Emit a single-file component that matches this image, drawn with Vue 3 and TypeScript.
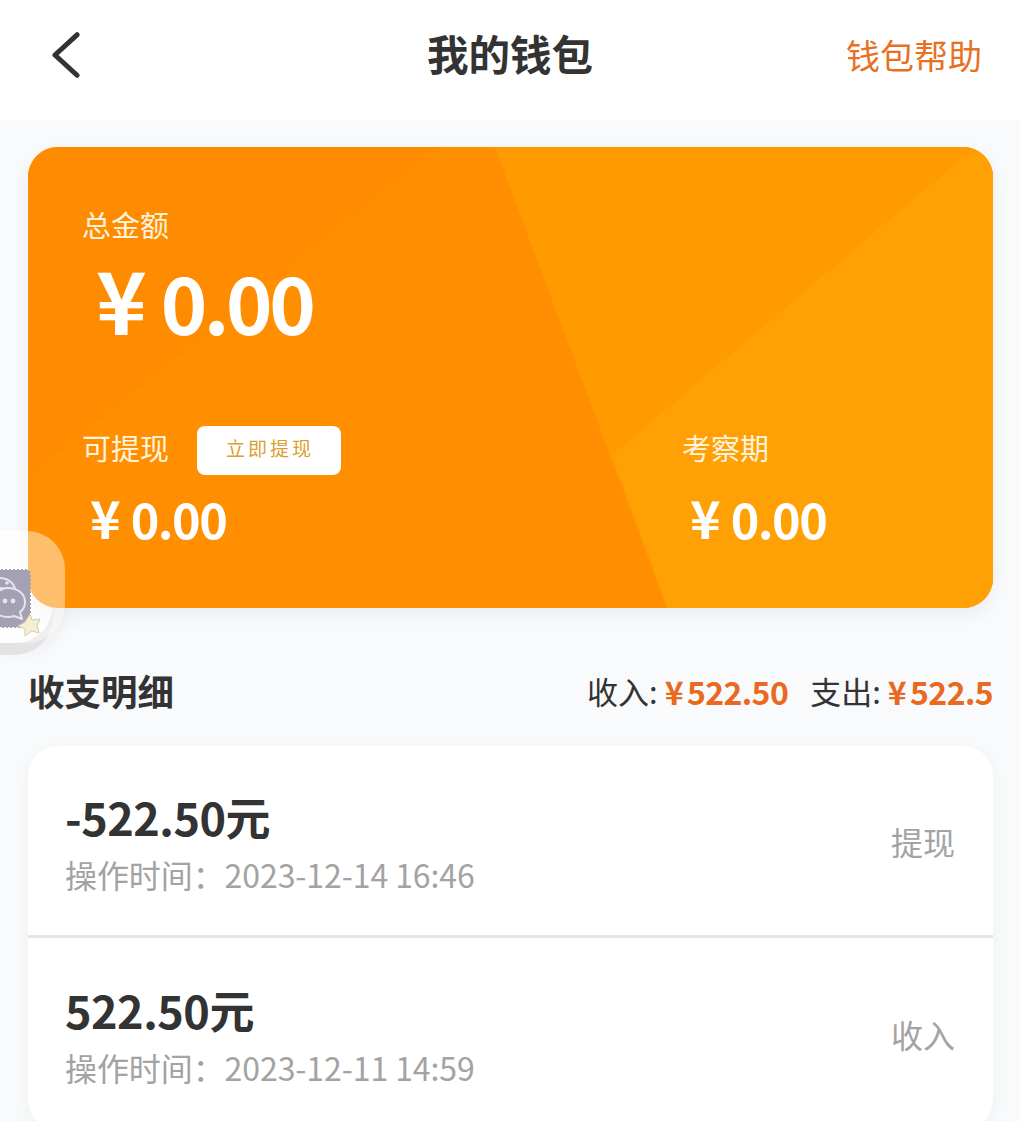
<script setup lang="ts">
interface Record {
  amount: string;
  time: string;
  kind: string;
}

const records: Record[] = [
  { amount: '-522.50元', time: '操作时间：2023-12-14 16:46', kind: '提现' },
  { amount: '522.50元', time: '操作时间：2023-12-11 14:59', kind: '收入' },
];
</script>

<template>
  <div class="page">
    <div class="float-base"></div>
    <header class="top">
      <svg class="back" viewBox="0 0 32 50" width="32" height="50">
        <path d="M28 3 L4 25 L28 47" fill="none" stroke="#333" stroke-width="5.5" stroke-linecap="round" stroke-linejoin="round" />
      </svg>
      <h1 class="title">我的钱包</h1>
      <span class="help">钱包帮助</span>
    </header>

    <main class="body">
      <section class="card">
        <svg class="card-bg" viewBox="0 0 965 461" preserveAspectRatio="none">
          <rect width="965" height="461" fill="#ff8f00" />
          <polygon points="0,0 412,0 0,330" fill="#ff8b00" />
          <polygon points="467,0 965,0 965,461 639,461" fill="#ff9a00" />
          <polygon points="584,308 935,10 965,0 965,461 639,461" fill="#ffa005" />
        </svg>
        <div class="total">
          <div class="label">总金额</div>
          <div class="big"><span class="yen">¥</span>0.00</div>
        </div>
        <div class="split">
          <div class="col">
            <div class="label-row">
              <span class="label">可提现</span>
              <button class="cash">立即提现</button>
            </div>
            <div class="mid"><span class="yen">¥</span>0.00</div>
          </div>
          <div class="col col-right">
            <div class="label-row">
              <span class="label">考察期</span>
            </div>
            <div class="mid"><span class="yen">¥</span>0.00</div>
          </div>
        </div>
      </section>

      <div class="summary">
        <h2 class="sub">收支明细</h2>
        <div class="sums">
          <span>收入:</span><b class="sum"><span class="yen-s">¥</span>522.50</b>
          <span class="gap">支出:</span><b class="sum"><span class="yen-s">¥</span>522.5</b>
        </div>
      </div>

      <section class="list">
        <div v-for="r in records" :key="r.time" class="row">
          <div>
            <div class="amount">{{ r.amount }}</div>
            <div class="time">{{ r.time }}</div>
          </div>
          <span class="kind">{{ r.kind }}</span>
        </div>
      </section>
    </main>

    <div class="float">
      <svg class="stamp" viewBox="0 0 60 60" width="60" height="60">
        <rect x="1" y="1" width="57" height="57" rx="4" fill="#a5a1b4" stroke="#a5a1b4" stroke-width="2" stroke-dasharray="2 2" />
        <ellipse cx="28" cy="22" rx="15" ry="13" fill="#a5a1b4" stroke="#e6e4ec" stroke-width="2" />
        <path d="M36 19 C46 19 53 25 53 33 C53 38 51 41 48 43 L50 50 L42 47 C40 48 38 48 36 48 C26 48 19 42 19 33 C19 25 26 19 36 19 Z" fill="#a5a1b4" stroke="#e6e4ec" stroke-width="2" stroke-linejoin="round" />
        <circle cx="33" cy="32" r="2.4" fill="#e6e4ec" />
        <circle cx="41" cy="32" r="2.4" fill="#e6e4ec" />
        <circle cx="29" cy="20" r="2" fill="#e6e4ec" />
        <circle cx="35" cy="14" r="1.8" fill="#e6e4ec" />
      </svg>
      <svg class="star" viewBox="0 0 24 24" width="24" height="24">
        <path d="M13 1 L15 7 L23 6 L20 13 L22 20 L15 18 L8 23 L8 16 L1 13 L8 9 Z" fill="#f5efcf" stroke="#cfcdb0" stroke-width="1" stroke-linejoin="round" />
      </svg>
    </div>
  </div>
</template>

<style>
html,
body {
  margin: 0;
  background: #f9fafb;
}
</style>

<style scoped>
.page {
  position: relative;
  width: 1020px;
  height: 1121px;
  overflow: hidden;
  background: #f9fafb;
  font-family: "Noto Sans CJK SC", "Noto Sans", sans-serif;
  color: #333;
}

.top {
  height: 120px;
  display: flex;
  align-items: center;
  justify-content: space-between;
  padding: 0 38px 10px 50px;
  box-sizing: border-box;
  background: #fff;
  position: relative;
}

.back {
  height: 46px;
}

.title {
  position: absolute;
  left: 0;
  right: 0;
  top: 23px;
  margin: 0;
  text-align: center;
  font-size: 41.5px;
  line-height: 60px;
  font-weight: 700;
}

.help {
  font-size: 34px;
  line-height: 50px;
  color: #e8701f;
}

.body {
  padding: 27px 27px 0 28px;
}

.card {
  position: relative;
  height: 461px;
  border-radius: 30px;
  overflow: hidden;
  box-sizing: border-box;
  padding: 57px 0 0 54px;
  color: #fff;
  box-shadow: 0 6px 18px rgba(120, 130, 150, 0.12);
}

.card-bg {
  position: absolute;
  inset: 0;
  width: 100%;
  height: 100%;
}

.total,
.split {
  position: relative;
}

.label {
  font-size: 29px;
  line-height: 40px;
  color: #fff3dc;
}

.big {
  margin: 11px 0 0 14px;
  height: 90px;
  font-size: 79px;
  line-height: 90px;
  font-weight: 700;
  letter-spacing: -3.5px;
}

.big .yen {
  font-size: 86px;
  line-height: 1;
  margin-right: 14px;
  letter-spacing: 0;
}

.split {
  display: flex;
  margin-top: 80px;
}

.col {
  width: 600px;
}

.col-right {
  width: auto;
}

.label-row {
  display: flex;
  align-items: center;
  gap: 28px;
  height: 50px;
}

.label-row .label {
  padding-bottom: 6px;
}

.cash {
  width: 144px;
  height: 49px;
  padding: 0 0 6px 2px;
  border: 0;
  border-radius: 8px;
  background: #fff;
  font-family: "Noto Sans CJK SC", serif;
  font-size: 19px;
  letter-spacing: 3px;
  color: #d9a030;
}

.mid {
  margin: 11px 0 0 8px;
  height: 64px;
  font-size: 48.5px;
  line-height: 64px;
  font-weight: 700;
  letter-spacing: -1.5px;
}

.mid .yen {
  margin-right: 10px;
  font-size: 52px;
  line-height: 1;
  letter-spacing: 0;
}

.summary {
  display: flex;
  align-items: center;
  justify-content: space-between;
  height: 138px;
  padding-top: 28px;
  box-sizing: border-box;
}

.sub {
  margin: 0;
  font-size: 36.5px;
  line-height: 50px;
  font-weight: 700;
  color: #333;
}

.sums {
  display: flex;
  align-items: center;
  font-size: 31px;
  line-height: 44px;
}

.sum {
  margin-left: 7px;
  color: #e8691f;
  font-size: 32px;
  font-weight: 700;
  letter-spacing: -0.6px;
}

.yen-s {
  margin-right: 4px;
}

.gap {
  margin-left: 22px;
}

.list {
  background: #fff;
  border-radius: 30px;
  box-shadow: 0 4px 16px rgba(120, 130, 150, 0.08);
}

.row {
  display: flex;
  align-items: center;
  justify-content: space-between;
  height: 192px;
  box-sizing: border-box;
  padding: 0 38px 0 37px;
  border-bottom: 3px solid #e6e6e6;
}

.row:last-child {
  border-bottom: 0;
}

.amount {
  font-size: 45px;
  line-height: 60px;
  font-weight: 700;
  letter-spacing: -0.5px;
}

.time {
  margin: 3px 0 -3px;
  font-size: 32px;
  line-height: 48px;
  letter-spacing: -0.08px;
  color: #a3a3a3;
}

.kind {
  font-size: 32px;
  color: #a3a3a3;
}

.float-base {
  position: absolute;
  left: -40px;
  top: 530px;
  width: 93px;
  height: 113px;
  border-radius: 38px;
  background: #fdfdfe;
  box-shadow: 0 12px 0 #e3e3e6, 12px 10px 14px rgba(170, 170, 180, 0.12);
}

.float {
  position: absolute;
  left: -40px;
  top: 531px;
  width: 105px;
  height: 112px;
  border-radius: 38px;
  background: rgba(255, 255, 255, 0.42);
}

.stamp {
  position: absolute;
  left: 12px;
  top: 38px;
}

.star {
  position: absolute;
  left: 57px;
  top: 82px;
}
</style>
